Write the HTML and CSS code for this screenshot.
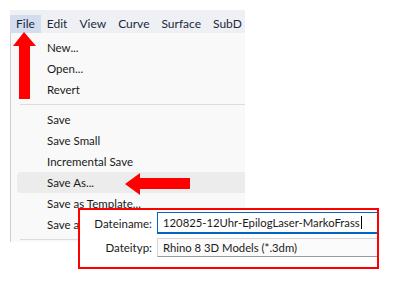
FILE: index.html
```html
<!DOCTYPE html>
<html lang="de">
<head>
    <meta charset="UTF-8">
    <title>Save As</title>
    <link rel="stylesheet" href="styles.css">
</head>
<body>
    <div class="shot">
        <!-- Menüleiste -->
        <div class="menubar">
            <span class="menubar-item active">File</span>
            <span class="menubar-item">Edit</span>
            <span class="menubar-item">View</span>
            <span class="menubar-item">Curve</span>
            <span class="menubar-item">Surface</span>
            <span class="menubar-item">SubD</span>
        </div>

        <!-- Dropdown -->
        <div class="menu">
            <div class="menu-item">New...</div>
            <div class="menu-item">Open...</div>
            <div class="menu-item">Revert</div>
            <div class="menu-sep"></div>
            <div class="menu-item">Save</div>
            <div class="menu-item">Save Small</div>
            <div class="menu-item">Incremental Save</div>
            <div class="menu-item hover">Save As...</div>
            <div class="menu-item">Save as Template...</div>
            <div class="menu-item">Save as...</div>
            <div class="menu-sep"></div>
        </div>

        <!-- Pfeile -->
        <svg class="arrow-up" width="24" height="68" viewBox="0 0 24 68">
            <polygon points="11,0 23,14 17,14 17,67 6,67 6,14 0,14" fill="#f00"/>
        </svg>
        <svg class="arrow-left" width="66" height="24" viewBox="0 0 66 24">
            <polygon points="0,11 15,0 15,5 65,5 65,16 15,16 15,22" fill="#f00"/>
        </svg>

        <!-- Dateidialog -->
        <div class="dialog">
            <div class="field">
                <label>Dateiname:</label>
                <div class="input focus">120825-12Uhr-EpilogLaser-MarkoFrass<span class="caret"></span></div>
            </div>
            <div class="field">
                <label>Dateityp:</label>
                <div class="input select">Rhino 8 3D Models (*.3dm)</div>
            </div>
        </div>
    </div>
</body>
</html>
```

FILE: styles.css
```css
/* Allgemein */
body {
    margin: 0;
    background-color: #fff;
    font-family: Lato, "Noto Sans", sans-serif;
    color: #1a1a1a;
}
.shot {
    position: relative;
    width: 395px;
    height: 281px;
    padding: 10px 0 0 10px;
    box-sizing: border-box;
    overflow: hidden;
}

/* Menüleiste */
.menubar {
    display: flex;
    align-items: flex-end;
    width: 235px;
    height: 23px;
    background-color: #eef0f3;
    overflow: hidden;
}
.menubar-item {
    height: 18px;
    line-height: 17px;
    padding: 0 6px;
    font-size: 12px;
    color: #1c2840;
    white-space: nowrap;
}
.menubar-item.active {
    background-color: #d3dded;
}

/* Dropdown */
.menu {
    width: 234px;
    padding: 4px 0 2px;
    background-color: #f9f9f9;
    border-left: 1px solid #cfcfcf;
}
.menu-item {
    height: 21px;
    line-height: 21px;
    padding-left: 36px;
    font-size: 11.5px;
    white-space: nowrap;
}
.menu-item.hover {
    margin-left: 6px;
    padding-left: 30px;
    background-color: #ececec;
    border-radius: 4px 0 0 4px;
}
.menu-sep {
    height: 1px;
    margin: 4px 0 4px 9px;
    background-color: #dcdcdc;
}
.menu-sep:last-child {
    margin-bottom: 0;
}

/* Pfeile */
.arrow-up {
    position: absolute;
    left: 13px;
    top: 32px;
}
.arrow-left {
    position: absolute;
    left: 125px;
    top: 173px;
}

/* Dateidialog */
.dialog {
    position: absolute;
    left: 78px;
    top: 208px;
    width: 297px;
    height: 55px;
    padding: 2px 0 0;
    border: 2px solid #f00;
    background-color: #fff;
    overflow: hidden;
}
.field {
    display: flex;
    align-items: center;
    gap: 5px;
    margin-bottom: 4px;
}
.field label {
    width: 72px;
    flex-shrink: 0;
    text-align: right;
    font-size: 11.5px;
    color: #1a1a1a;
}
.input {
    flex-shrink: 0;
    width: 260px;
    height: 19px;
    line-height: 19px;
    padding-left: 5px;
    font-size: 11.3px;
    border: 1px solid #d6d6d6;
    border-bottom-color: #9a9a9a;
    background-color: #fbfbfb;
    white-space: nowrap;
}
.input.focus {
    border-color: #0067c0;
    border-bottom-width: 2px;
    background-color: #fff;
}
.input.select {
    height: 17px;
    line-height: 17px;
}
.caret {
    display: inline-block;
    width: 1px;
    height: 13px;
    margin-left: 1px;
    vertical-align: -2px;
    background-color: #000;
}
```
